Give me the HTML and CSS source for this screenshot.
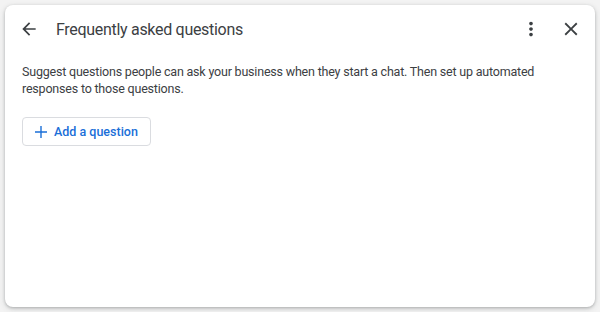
FILE: index.html
```html
<!DOCTYPE html>
<html lang="en">
<head>
    <meta charset="UTF-8">
    <meta name="viewport" content="width=device-width, initial-scale=1.0">
    <title>Frequently asked questions</title>
    <link rel="stylesheet" href="styles.css">
</head>
<body>
    <div class="dialog">
        <div class="header">
            <button class="icon-btn back" aria-label="Back">
                <svg viewBox="0 0 24 24" width="20" height="20"><path d="M20 11H7.83l5.59-5.59L12 4l-8 8 8 8 1.41-1.41L7.83 13H20v-2z"/></svg>
            </button>
            <h1 class="title">Frequently asked questions</h1>
            <button class="icon-btn more" aria-label="More options">
                <svg viewBox="0 0 24 24" width="22" height="22"><path d="M12 8c1.1 0 2-.9 2-2s-.9-2-2-2-2 .9-2 2 .9 2 2 2zm0 2c-1.1 0-2 .9-2 2s.9 2 2 2 2-.9 2-2-.9-2-2-2zm0 6c-1.1 0-2 .9-2 2s.9 2 2 2 2-.9 2-2-.9-2-2-2z"/></svg>
            </button>
            <button class="icon-btn close" aria-label="Close">
                <svg viewBox="0 0 24 24" width="22" height="22"><path d="M19 6.41L17.59 5 12 10.59 6.41 5 5 6.41 10.59 12 5 17.59 6.41 19 12 13.41 17.59 19 19 17.59 13.41 12z"/></svg>
            </button>
        </div>
        <div class="content">
            <p class="intro">Suggest questions people can ask your business when they start a chat. Then set up automated responses to those questions.</p>
            <button class="add-btn">
                <svg viewBox="0 0 20 20" width="20" height="20"><path d="M10 4v12M4 10h12"/></svg>
                <span>Add a question</span>
            </button>
        </div>
    </div>
</body>
</html>
```

FILE: styles.css
```css
body {
    margin: 0;
    padding: 5px;
    background-color: #f3f3f3;
    font-family: Roboto, "Liberation Sans", Arial, sans-serif;
    color: #3c4043;
}
.dialog {
    height: 302px;
    background-color: #fff;
    border-radius: 8px;
    box-shadow: 0 1px 3px rgba(60, 64, 67, 0.3), 0 2px 6px rgba(60, 64, 67, 0.15);
    box-sizing: border-box;
}
.header {
    display: flex;
    align-items: center;
    height: 48px;
    padding: 0 13px 0 14px;
}
.icon-btn {
    display: flex;
    align-items: center;
    justify-content: center;
    padding: 0;
    border: none;
    background: none;
    fill: #3c4043;
    cursor: pointer;
}
.back {
    width: 20px;
    height: 20px;
}
.title {
    flex: 1;
    margin: 0 0 0 17px;
    font-size: 16px;
    font-weight: 400;
    letter-spacing: -0.3px;
    color: #3c4043;
}
.more {
    width: 22px;
    height: 22px;
    margin-right: 18px;
}
.close {
    width: 22px;
    height: 22px;
}
.content {
    padding: 10px 17px;
}
.intro {
    margin: 0;
    font-size: 12.5px;
    line-height: 17px;
    letter-spacing: -0.2px;
    color: #3c4043;
}
.add-btn {
    display: flex;
    align-items: center;
    gap: 3px;
    margin-top: 20px;
    height: 29px;
    padding: 0 12px 0 8px;
    border: 1px solid #dadce0;
    border-radius: 4px;
    background: #fff;
    color: #1a6fd8;
    font-family: Roboto, "Liberation Sans", Arial, sans-serif;
    font-size: 12.5px;
    font-weight: 500;
    cursor: pointer;
}
.add-btn svg {
    fill: none;
    stroke: #1a6fd8;
    stroke-width: 1.4;
}
```
